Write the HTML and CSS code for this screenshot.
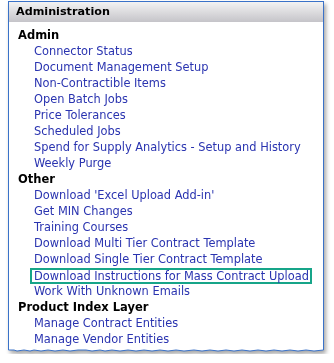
FILE: index.html
```html
<!DOCTYPE html>
<html lang="en">
<head>
    <meta charset="UTF-8">
    <meta name="viewport" content="width=device-width, initial-scale=1.0">
    <title>Administration</title>
    <link rel="stylesheet" href="styles.css">
</head>
<body>
    <div class="panel-wrap">
        <div class="panel">
            <div class="panel-header">Administration</div>
            <div class="panel-body">
                <div class="group-title">Admin</div>
                <a class="menu-link" href="#">Connector Status</a>
                <a class="menu-link" href="#">Document Management Setup</a>
                <a class="menu-link" href="#">Non-Contractible Items</a>
                <a class="menu-link" href="#">Open Batch Jobs</a>
                <a class="menu-link" href="#">Price Tolerances</a>
                <a class="menu-link" href="#">Scheduled Jobs</a>
                <a class="menu-link" href="#">Spend for Supply Analytics - Setup and History</a>
                <a class="menu-link" href="#">Weekly Purge</a>
                <div class="group-title">Other</div>
                <a class="menu-link" href="#">Download 'Excel Upload Add-in'</a>
                <a class="menu-link" href="#">Get MIN Changes</a>
                <a class="menu-link" href="#">Training Courses</a>
                <a class="menu-link" href="#">Download Multi Tier Contract Template</a>
                <a class="menu-link" href="#">Download Single Tier Contract Template</a>
                <div class="menu-row">
                    <a class="menu-link marked" href="#">Download Instructions for Mass Contract Upload</a>
                </div>
                <a class="menu-link" href="#">Work With Unknown Emails</a>
                <div class="group-title">Product Index Layer</div>
                <a class="menu-link" href="#">Manage Contract Entities</a>
                <a class="menu-link" href="#">Manage Vendor Entities</a>
            </div>
        </div>
        <svg class="torn-edge" width="316" height="7" viewBox="0 0 316 7">
            <polygon fill="#fff" points="0,0 0,3 6,3 9,4 16,3 22,4 26,3 33,4 40,3 47,4 55,3 62,4 70,3 78,3 84,4 92,3 97,4 104,3 112,4 120,3 128,4 136,3 144,4 152,3 160,4 168,3 176,4 186,3 194,4 202,3 210,4 218,3 226,4 234,3 242,4 250,3 258,4 266,3 274,4 282,3 290,4 298,3 306,4 316,3 316,0"/>
            <polyline fill="none" stroke="#3a72c8" stroke-width="1" points="0.5,0 0.5,3 6,3 9,4 16,3 22,4 26,3 33,4 40,3 47,4 55,3 62,4 70,3 78,3 84,4 92,3 97,4 104,3 112,4 120,3 128,4 136,3 144,4 152,3 160,4 168,3 176,4 186,3 194,4 202,3 210,4 218,3 226,4 234,3 242,4 250,3 258,4 266,3 274,4 282,3 290,4 298,3 306,4 315.5,3 315.5,0"/>
        </svg>
    </div>
</body>
</html>
```

FILE: styles.css
```css
body {
    margin: 0;
    background-color: #fff;
    font-family: "DejaVu Sans", Verdana, sans-serif;
    font-size: 11.4px;
}
.panel-wrap {
    width: 316px;
    margin: 1px 0 0 8px;
    filter: drop-shadow(2px 3px 2px rgba(0, 0, 0, 0.35));
}
.panel {
    background-color: #fff;
    border: 1px solid #3a72c8;
    border-bottom: none;
}
.panel-header {
    height: 20px;
    line-height: 20px;
    padding-left: 7px;
    font-size: 11.2px;
    font-weight: bold;
    color: #000;
    background: linear-gradient(to bottom, #f3f3f3, #c5c4c9);
}
.panel-body {
    padding-top: 5px;
}
.group-title {
    height: 16px;
    line-height: 16px;
    padding-left: 9px;
    font-size: 11.5px;
    font-weight: bold;
    color: #000;
}
.menu-link {
    display: block;
    height: 16px;
    line-height: 16px;
    padding-left: 25px;
    color: #2a34b0;
    text-decoration: none;
    white-space: nowrap;
}
.menu-row {
    height: 16px;
    padding-left: 21px;
}
.menu-link.marked {
    display: inline-block;
    height: 12px;
    line-height: 12px;
    padding: 0 1px 0 2px;
    margin-top: 1px;
    border: 2px solid #17a589;
}
.torn-edge {
    display: block;
}
```
